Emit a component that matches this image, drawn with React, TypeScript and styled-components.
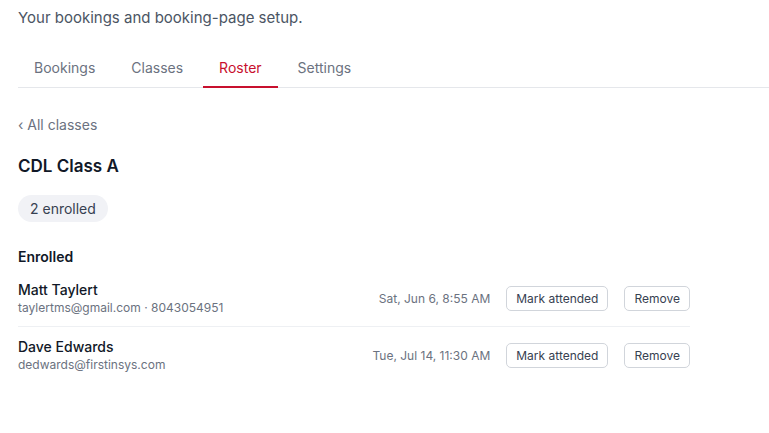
import React from "react";
import styled, { createGlobalStyle } from "styled-components";

const GlobalStyle = createGlobalStyle`
  body {
    margin: 0;
    background: #ffffff;
    font-family: Inter, "Noto Sans", Arial, sans-serif;
    color: #111827;
  }
`;

type Student = {
  name: string;
  contact: string;
  when: string;
};

const students: Student[] = [
  {
    name: "Matt Taylert",
    contact: "taylertms@gmail.com · 8043054951",
    when: "Sat, Jun 6, 8:55 AM",
  },
  {
    name: "Dave Edwards",
    contact: "dedwards@firstinsys.com",
    when: "Tue, Jul 14, 11:30 AM",
  },
];

const tabs = ["Bookings", "Classes", "Roster", "Settings"];

const App = () => {
  return (
    <>
      <GlobalStyle />
      <Page>
        <Subtitle>Your bookings and booking-page setup.</Subtitle>
        <TabBar>
          {tabs.map((t) => (
            <Tab key={t} $active={t === "Roster"}>
              {t}
            </Tab>
          ))}
        </TabBar>

        <Content>
          <BackLink>‹ All classes</BackLink>
          <ClassTitle>CDL Class A</ClassTitle>
          <Pill>2 enrolled</Pill>
          <SectionTitle>Enrolled</SectionTitle>
          <RosterList>
            {students.map((s) => (
              <RosterRow key={s.name}>
                <Person>
                  <Name>{s.name}</Name>
                  <Contact>{s.contact}</Contact>
                </Person>
                <When>{s.when}</When>
                <Actions>
                  <ActionButton>Mark attended</ActionButton>
                  <ActionButton>Remove</ActionButton>
                </Actions>
              </RosterRow>
            ))}
          </RosterList>
        </Content>
      </Page>
    </>
  );
};

const Page = styled.div`
  padding: 8px 0 0 18px;
`;

const Subtitle = styled.p`
  margin: 0;
  font-size: 15px;
  line-height: 20px;
  color: #4b5563;
`;

const TabBar = styled.div`
  display: flex;
  gap: 4px;
  margin-top: 21px;
  border-bottom: 1px solid #e5e7eb;
`;

const Tab = styled.div<{ $active?: boolean }>`
  padding: 10px 16px 9px;
  font-size: 14px;
  font-weight: 400;
  line-height: 18px;
  color: ${(p) => (p.$active ? "#c8102e" : "#6b7280")};
  border-bottom: 2px solid ${(p) => (p.$active ? "#c8102e" : "transparent")};
  margin-bottom: -1px;
`;

const Content = styled.div`
  display: flex;
  flex-direction: column;
  align-items: flex-start;
  max-width: 672px;
  padding-top: 28px;
`;

const BackLink = styled.a`
  font-size: 14px;
  line-height: 18px;
  color: #6b7280;
  cursor: pointer;
`;

const ClassTitle = styled.h2`
  margin: 20px 0 0;
  font-size: 17px;
  font-weight: 600;
  line-height: 24px;
  color: #111827;
`;

const Pill = styled.span`
  margin-top: 17px;
  padding: 0 12px;
  height: 27px;
  display: inline-flex;
  align-items: center;
  border-radius: 14px;
  background: #f1f2f6;
  font-size: 14px;
  color: #374151;
`;

const SectionTitle = styled.h3`
  margin: 26px 0 0;
  font-size: 14px;
  font-weight: 600;
  line-height: 18px;
  color: #111827;
`;

const RosterList = styled.div`
  align-self: stretch;
  margin-top: 15px;
`;

const RosterRow = styled.div`
  display: flex;
  align-items: center;
  gap: 16px;
  padding: 0 0 10px;
  & + & {
    border-top: 1px solid #eef0f3;
    padding-top: 11px;
  }
`;

const Person = styled.div`
  flex: 1;
  display: flex;
  flex-direction: column;
  gap: 1px;
`;

const Name = styled.div`
  font-size: 14px;
  font-weight: 500;
  line-height: 18px;
  color: #111827;
`;

const Contact = styled.div`
  font-size: 12px;
  line-height: 16px;
  color: #6b7280;
`;

const When = styled.div`
  font-size: 12px;
  color: #6b7280;
`;

const Actions = styled.div`
  display: flex;
  gap: 16px;
`;

const ActionButton = styled.button`
  height: 25px;
  padding: 0 9px;
  border: 1px solid #d1d5db;
  border-radius: 5px;
  background: #ffffff;
  font-family: inherit;
  font-size: 12px;
  font-weight: 400;
  color: #374151;
  cursor: pointer;
`;

export default App;
